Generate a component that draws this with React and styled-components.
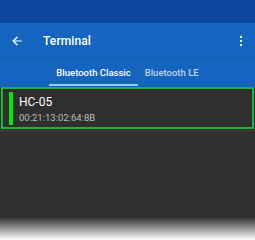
import React, { useState } from "react";
import styled, { createGlobalStyle } from "styled-components";

const GlobalStyle = createGlobalStyle`
  html, body {
    margin: 0;
    padding: 0;
    background: #ffffff;
  }
  body {
    font-family: Roboto, "Noto Sans", sans-serif;
  }
`;

const Screen = styled.div`
  width: 255px;
  height: 240px;
  display: flex;
  flex-direction: column;
  background: #303030;
  overflow: hidden;
`;

const StatusBar = styled.div`
  height: 23px;
  background: #0d47a1;
  flex-shrink: 0;
`;

const Toolbar = styled.div`
  height: 34px;
  background: #1565c0;
  display: flex;
  align-items: center;
  padding: 1px 7px 0 10px;
  box-sizing: border-box;
  color: #ffffff;
  flex-shrink: 0;
`;

const IconButton = styled.div`
  width: 14px;
  height: 14px;
  display: flex;
  align-items: center;
  justify-content: center;
`;

const Title = styled.div`
  font-size: 12px;
  font-weight: 500;
  margin-left: 19px;
  flex: 1;
  letter-spacing: 0.1px;
`;

const TabBar = styled.div`
  height: 29px;
  background: #1565c0;
  border-top: 1px solid #1259ad;
  display: flex;
  justify-content: center;
  flex-shrink: 0;
`;

const Tab = styled.div`
  position: relative;
  padding: 0 7px;
  display: flex;
  align-items: center;
  font-size: 9.5px;
  font-weight: 500;
  color: ${(p) => (p.$active ? "#ffffff" : "rgba(255,255,255,0.72)")};
  cursor: pointer;

  &::after {
    content: "";
    position: absolute;
    left: 0;
    right: 0;
    bottom: 1px;
    height: 2px;
    background: ${(p) => (p.$active ? "#90caf9" : "transparent")};
  }
`;

const List = styled.div`
  flex: 1;
  display: flex;
  flex-direction: column;
`;

const Device = styled.div`
  margin: 0 1px;
  height: 38px;
  border: 2px solid #1fb238;
  display: flex;
  align-items: center;
  padding: 0 6px;
  background: #2f2f2f;
`;

const Marker = styled.div`
  width: 4px;
  height: 33px;
  margin-top: 1px;
  background: #00ee00;
  border-right: 1px solid #3a2440;
  flex-shrink: 0;
`;

const DeviceText = styled.div`
  margin-left: 5px;
  padding-top: 2px;
  display: flex;
  flex-direction: column;
`;

const DeviceName = styled.div`
  font-size: 12px;
  color: #ffffff;
  line-height: 14px;
`;

const DeviceAddress = styled.div`
  font-size: 9.5px;
  color: #bdbdbd;
  line-height: 12px;
  margin-top: 3px;
`;

const Divider = styled.div`
  height: 1px;
  background: #424242;
  margin-top: 1px;
`;

const Fade = styled.div`
  height: 23px;
  flex-shrink: 0;
  background: linear-gradient(#303030, #8a8a8a 45%, #ffffff);
`;

const devices = [{ name: "HC-05", address: "00:21:13:02:64:8B" }];

export default function App() {
  const [tab, setTab] = useState(0);
  return (
    <>
      <GlobalStyle />
      <Screen>
        <StatusBar />
        <Toolbar>
          <IconButton>
            <svg width="14" height="14" viewBox="0 0 24 24" fill="#ffffff">
              <path d="M20 11H7.83l5.59-5.59L12 4l-8 8 8 8 1.41-1.41L7.83 13H20v-2z" />
            </svg>
          </IconButton>
          <Title>Terminal</Title>
          <IconButton>
            <svg width="14" height="14" viewBox="0 0 24 24" fill="#ffffff">
              <circle cx="12" cy="5" r="2" />
              <circle cx="12" cy="12" r="2" />
              <circle cx="12" cy="19" r="2" />
            </svg>
          </IconButton>
        </Toolbar>
        <TabBar>
          {["Bluetooth Classic", "Bluetooth LE"].map((t, i) => (
            <Tab key={t} $active={tab === i} onClick={() => setTab(i)}>
              {t}
            </Tab>
          ))}
        </TabBar>
        <List>
          {devices.map((d) => (
            <React.Fragment key={d.address}>
              <Device>
                <Marker />
                <DeviceText>
                  <DeviceName>{d.name}</DeviceName>
                  <DeviceAddress>{d.address}</DeviceAddress>
                </DeviceText>
              </Device>
              <Divider />
            </React.Fragment>
          ))}
        </List>
        <Fade />
      </Screen>
    </>
  );
}
